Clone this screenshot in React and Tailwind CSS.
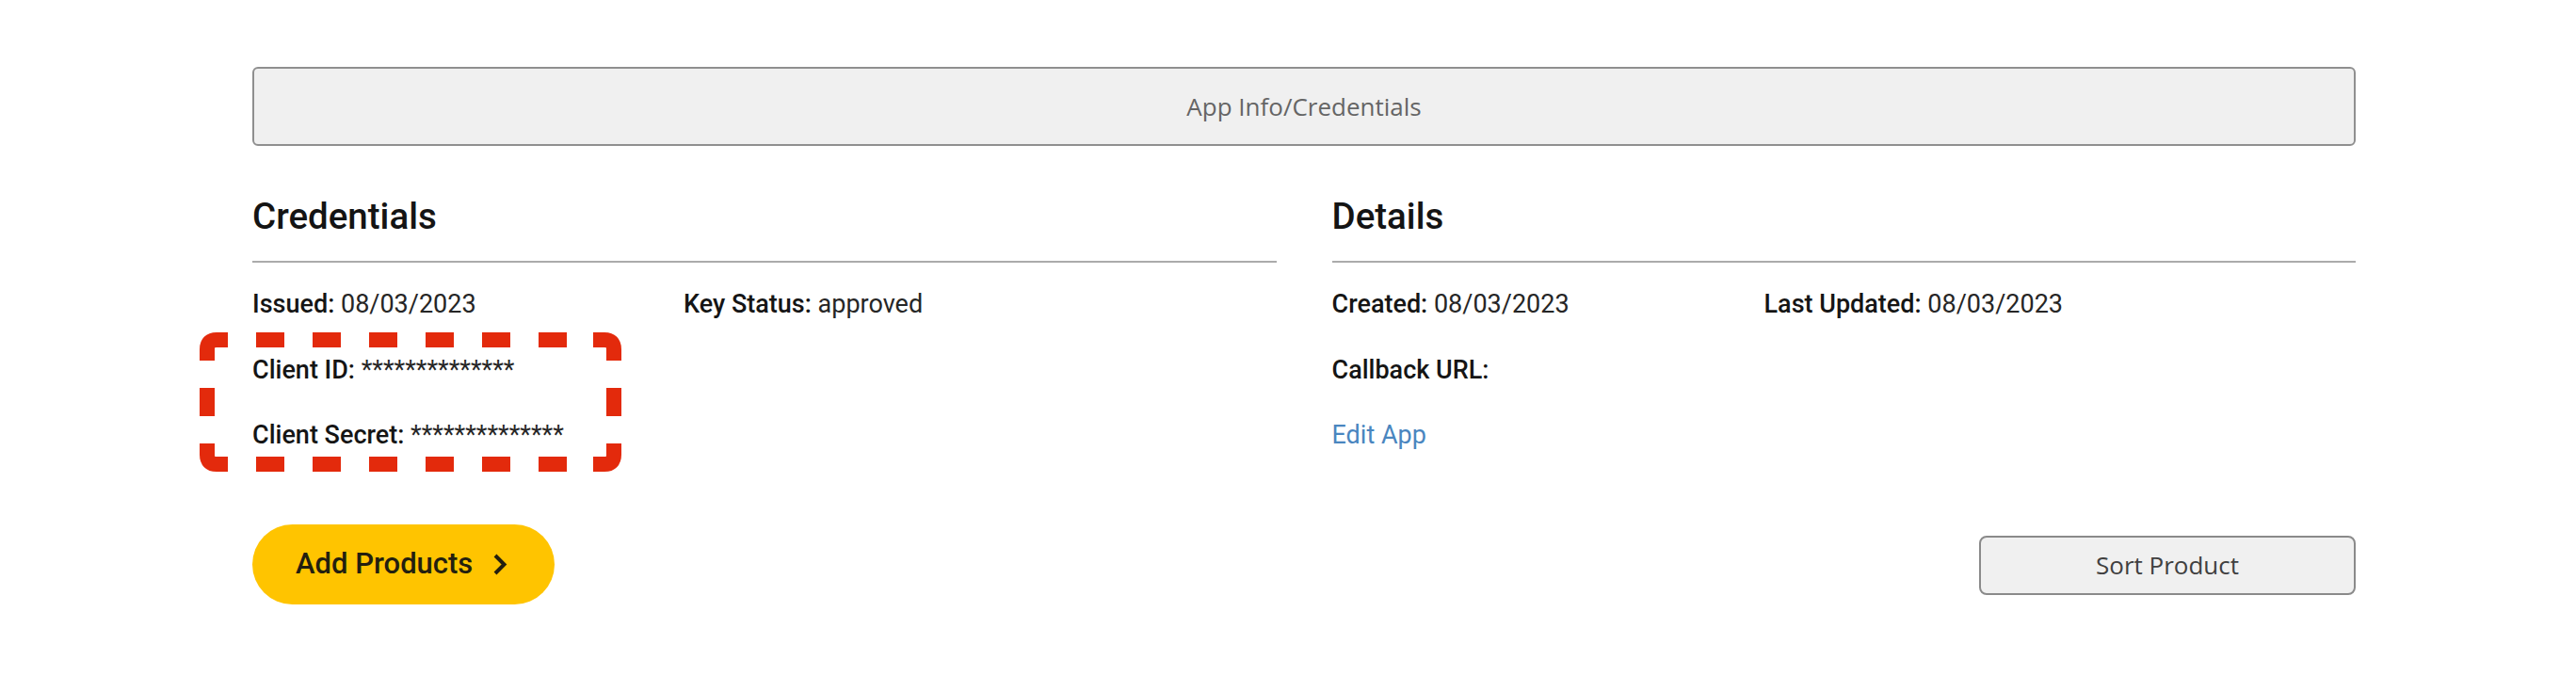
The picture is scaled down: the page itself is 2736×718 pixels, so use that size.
import React from 'react';

const Field = ({ label, value }) => (
  <div className="whitespace-nowrap">
    <span className="font-medium text-[#151515]">{label}</span>{' '}
    <span className="text-[#262626]">{value}</span>
  </div>
);

const SectionTitle = ({ children }) => (
  <>
    <h2 className="text-[38.5px] leading-[38px] font-medium text-[#141414]">{children}</h2>
    <div className="mt-[28px] h-[2px] bg-[#ababab]" />
  </>
);

// red dashed highlight drawn over the client id / secret rows
const Highlight = () => (
  <svg
    className="absolute left-[-56px] top-[43px] pointer-events-none"
    width="448"
    height="148"
    viewBox="0 0 448 148"
    fill="none"
    stroke="#e32a0c"
    strokeWidth="16"
  >
    <path d="M8 30 V18 Q8 8 18 8 H30" />
    <path d="M418 8 H430 Q440 8 440 18 V30" />
    <path d="M8 118 V130 Q8 140 18 140 H30" />
    <path d="M418 140 H430 Q440 140 440 130 V118" />
    <path d="M60 8 H390" strokeDasharray="30 30" />
    <path d="M60 140 H390" strokeDasharray="30 30" />
    <path d="M8 59 V89" />
    <path d="M440 59 V89" />
  </svg>
);

export default function App() {
  return (
    <div className="min-h-screen bg-white font-['Roboto',sans-serif]">
      <div className="ml-[268px] w-[2234px] pt-[71px]">
        {/* Tab bar */}
        <div className="flex h-[84px] items-center justify-center rounded-[6px] border-2 border-[#8f8f8f] bg-[#f0f0f0] font-['Open_Sans',sans-serif] text-[26px] text-[#656565]">
          App Info/Credentials
        </div>

        <div className="mt-[56px] grid grid-cols-2 gap-x-[59px]">
          {/* Credentials */}
          <section>
            <SectionTitle>Credentials</SectionTitle>
            <div className="relative mt-[31px] flex flex-col gap-[42.5px] text-[27px] leading-[27px]">
              <div className="grid grid-cols-[458px_1fr]">
                <Field label="Issued:" value="08/03/2023" />
                <Field label="Key Status:" value="approved" />
              </div>
              <Field label="Client ID:" value="**************" />
              <Field label="Client Secret:" value="**************" />
              <Highlight />
            </div>
          </section>

          {/* Details */}
          <section>
            <SectionTitle>Details</SectionTitle>
            <div className="mt-[31px] flex flex-col gap-[42.5px] text-[27px] leading-[27px]">
              <div className="grid grid-cols-[459px_1fr]">
                <Field label="Created:" value="08/03/2023" />
                <Field label="Last Updated:" value="08/03/2023" />
              </div>
              <div className="font-medium text-[#151515]">Callback URL:</div>
              <a href="#" className="w-fit text-[#4a86bf]">Edit App</a>
            </div>
          </section>
        </div>

        {/* Actions */}
        <div className="mt-[81px] flex items-center justify-between">
          <button className="flex h-[85px] w-[321px] items-center gap-[21px] rounded-full bg-[#ffc400] pl-[46px] text-[31px] font-medium text-[#231f0f]">
            <span>Add Products</span>
            <svg width="16" height="25" viewBox="0 0 16 25" fill="none" stroke="#231f0f" strokeWidth="4">
              <path d="M3 3 L12.5 12.5 L3 22" />
            </svg>
          </button>
          <button className="mt-[2px] h-[63px] w-[400px] rounded-[8px] border-2 border-[#8a8a8a] bg-[#f0f0f0] font-['Open_Sans',sans-serif] text-[26px] text-[#404040]">
            Sort Product
          </button>
        </div>
      </div>
    </div>
  );
}
